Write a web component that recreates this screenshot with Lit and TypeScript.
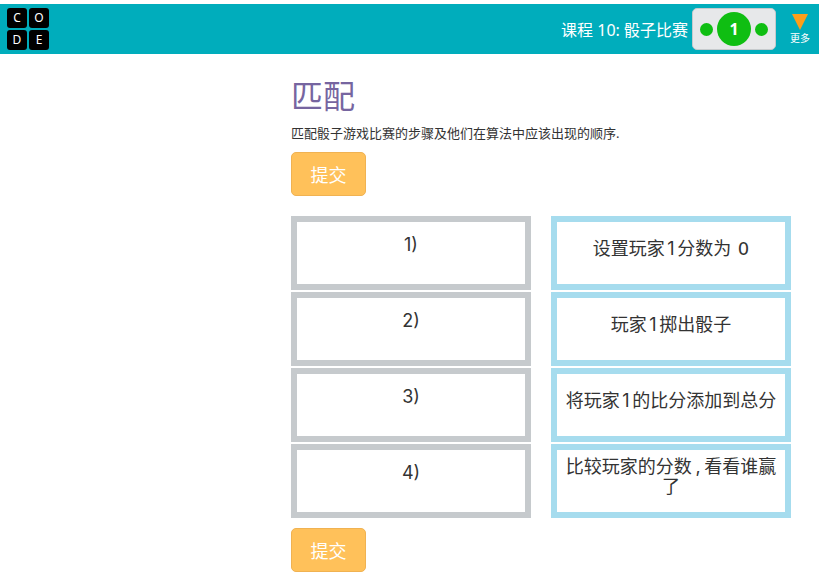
import { LitElement, html, css } from "lit";
import { customElement } from "lit/decorators.js";

@customElement("app-root")
export class AppRoot extends LitElement {
  static styles = css`
    :host {
      display: block;
      height: 581px;
      overflow: hidden;
      background: #fff;
      color: #333;
      font-family: "Noto Sans", "Noto Sans CJK SC", sans-serif;
      font-weight: 300;
    }
    .header {
      margin-top: 4px;
      height: 50px;
      background: #00adbc;
      display: flex;
      align-items: center;
      padding: 0 7px 0 7px;
      box-sizing: border-box;
    }
    .logo {
      display: grid;
      grid-template-columns: 20px 20px;
      grid-auto-rows: 20px;
      gap: 2px;
    }
    .logo span {
      background: #000;
      color: #fff;
      border-radius: 3px;
      font-size: 12px;
      font-weight: 400;
      line-height: 20px;
      text-align: center;
    }
    .lesson {
      margin-left: auto;
      color: #fff;
      font-size: 16px;
      font-weight: 400;
      margin-right: 4px;
      white-space: nowrap;
    }
    .progress {
      width: 84px;
      height: 42px;
      box-sizing: border-box;
      background: #e7e8ea;
      border: 1px solid #c6cacd;
      border-radius: 5px;
      display: flex;
      align-items: center;
      justify-content: center;
      gap: 4px;
    }
    .dot {
      width: 13px;
      height: 13px;
      border-radius: 50%;
      background: #0fbe12;
    }
    .current {
      width: 34px;
      height: 34px;
      border-radius: 50%;
      background: #0fbe12;
      color: #fff;
      font-size: 16px;
      font-weight: 700;
      line-height: 34px;
      text-align: center;
    }
    .more {
      width: 24px;
      margin-left: 12px;
      display: flex;
      flex-direction: column;
      align-items: center;
      color: #fff;
      font-size: 10px;
      font-weight: 400;
      line-height: 12px;
    }
    .more svg {
      display: block;
      margin-bottom: 2px;
    }
    .main {
      margin-left: 291px;
      width: 500px;
    }
    h1 {
      margin: 22px 0 0;
      font-size: 32px;
      font-weight: 400;
      line-height: 40px;
      color: #7665a0;
    }
    p {
      margin: 8px 0 0;
      font-size: 13px;
      font-weight: 400;
      line-height: 18px;
      color: #333;
    }
    button {
      display: block;
      width: 75px;
      height: 44px;
      padding: 0 0 1px;
      box-sizing: border-box;
      background: #ffc15a;
      border: 1px solid #f0b252;
      border-radius: 5px;
      color: #fff;
      font-family: inherit;
      font-size: 18px;
      font-weight: 400;
    }
    .submit-top {
      margin-top: 10px;
    }
    .submit-bottom {
      margin-top: 10px;
    }
    .board {
      margin-top: 20px;
      display: grid;
      grid-template-columns: 240px 240px;
      grid-auto-rows: 74px;
      column-gap: 20px;
      row-gap: 2px;
    }
    .cell {
      box-sizing: border-box;
      border: 6px solid;
      background: #fff;
      padding: 0 8px;
      font-family: "Inter", "Noto Sans CJK SC", sans-serif;
      font-size: 18px;
      font-weight: 400;
      line-height: 20px;
      text-align: center;
      color: #333;
    }
    .slot {
      border-color: #c6cacd;
      padding-top: 13px;
    }
    .item {
      border-color: #a6dcee;
      display: flex;
      align-items: center;
      justify-content: center;
      padding-bottom: 9px;
    }
    .item span {
      word-spacing: -2.5px;
    }
    .item span.loose {
      word-spacing: -1.5px;
    }
    .zero {
      font-family: "DejaVu Sans", sans-serif;
      font-weight: 400;
      margin-left: 4px;
    }
  `;

  render() {
    const slots = ["1)", "2)", "3)", "4)"];
    const items = [
      html`<span>设置玩家 1 分数为 <b class="zero">0</b></span>`,
      html`<span>玩家 1 掷出骰子</span>`,
      html`<span>将玩家 1 的比分添加到总分</span>`,
      html`<span class="loose">比较玩家的分数 , 看看谁赢了</span>`,
    ];
    return html`
      <div class="header">
        <div class="logo">
          <span>C</span><span>O</span><span>D</span><span>E</span>
        </div>
        <div class="lesson">课程 10: 骰子比赛</div>
        <div class="progress">
          <span class="dot"></span>
          <span class="current">1</span>
          <span class="dot"></span>
        </div>
        <div class="more">
          <svg width="16" height="16" viewBox="0 0 16 16">
            <path d="M0 0H16L8 16Z" fill="#ff9e18"></path>
          </svg>
          <span>更多</span>
        </div>
      </div>
      <div class="main">
        <h1>匹配</h1>
        <p>匹配骰子游戏比赛的步骤及他们在算法中应该出现的顺序.</p>
        <button class="submit-top">提交</button>
        <div class="board">
          ${slots.map(
            (s, i) => html`
              <div class="cell slot">${s}</div>
              <div class="cell item">${items[i]}</div>
            `
          )}
        </div>
        <button class="submit-bottom">提交</button>
      </div>
    `;
  }
}
